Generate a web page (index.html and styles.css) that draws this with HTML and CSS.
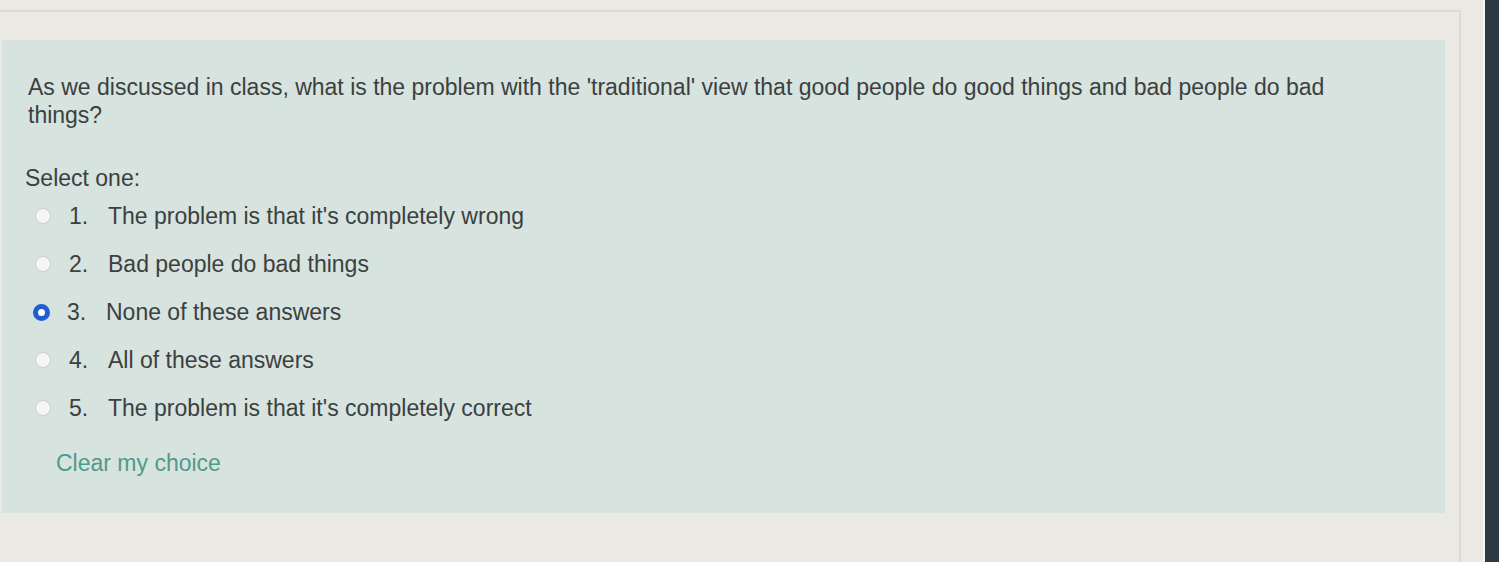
FILE: index.html
```html
<!DOCTYPE html>
<html lang="en">
<head>
    <meta charset="UTF-8">
    <meta name="viewport" content="width=device-width, initial-scale=1.0">
    <title>Quiz question</title>
    <link rel="stylesheet" href="styles.css">
</head>
<body>
<div class="screen">
    <div class="page">
        <div class="formulation">
            <div class="qtext">As we discussed in class, what is the problem with the 'traditional' view that good people do good things and bad people do bad things?</div>
            <div class="prompt">Select one:</div>
            <div class="answer">
                <label class="option">
                    <span class="radio"></span>
                    <span class="num">1.</span>
                    <span class="label">The problem is that it's completely wrong</span>
                </label>
                <label class="option">
                    <span class="radio"></span>
                    <span class="num">2.</span>
                    <span class="label">Bad people do bad things</span>
                </label>
                <label class="option">
                    <span class="radio checked"></span>
                    <span class="num">3.</span>
                    <span class="label">None of these answers</span>
                </label>
                <label class="option">
                    <span class="radio"></span>
                    <span class="num">4.</span>
                    <span class="label">All of these answers</span>
                </label>
                <label class="option">
                    <span class="radio"></span>
                    <span class="num">5.</span>
                    <span class="label">The problem is that it's completely correct</span>
                </label>
            </div>
            <a class="clear" href="#">Clear my choice</a>
        </div>
    </div>
    <div class="bezel"></div>
</div>
</body>
</html>
```

FILE: styles.css
```css
html,
body {
margin: 0;
padding: 0;
height: 100%;
background: #ebe9e3;
font-family: "Liberation Sans", Arial, sans-serif;
color: #3b4040;
}

.screen {
display: flex;
height: 100%;
}

.page {
flex: 1;
margin-top: 10px;
margin-right: 22px;
border-top: 2px solid #dcdad3;
border-right: 2px solid #dcdad3;
}

.formulation {
margin: 28px 14px 0 2px;
padding: 33px 24px 36px 26px;
background: #d7e3de;
}

.qtext {
max-width: 1340px;
font-size: 23px;
line-height: 28px;
}

.prompt {
margin-top: 35px;
margin-left: -3px;
font-size: 23px;
line-height: 28px;
}

.answer {
display: flex;
flex-direction: column;
}

.option {
display: flex;
align-items: center;
height: 48px;
font-size: 23px;
}

.radio {
box-sizing: border-box;
width: 16px;
height: 16px;
border-radius: 50%;
margin-left: 7px;
background: #f6f7f5;
border: 1px solid #c8ccc9;
}

.radio.checked {
width: 17px;
height: 17px;
margin-left: 5px;
background: #fff;
border: 5px solid #1f5fcf;
}

.num {
margin-left: 18px;
width: 39px;
}

.checked + .num {
margin-left: 17px;
}

.clear {
display: block;
margin-top: 17px;
margin-left: 28px;
font-size: 23px;
line-height: 28px;
color: #4f9b8b;
text-decoration: none;
}

.bezel {
width: 14px;
border-left: 2px solid #f3f4f6;
background: #2e3a42;
}
```
